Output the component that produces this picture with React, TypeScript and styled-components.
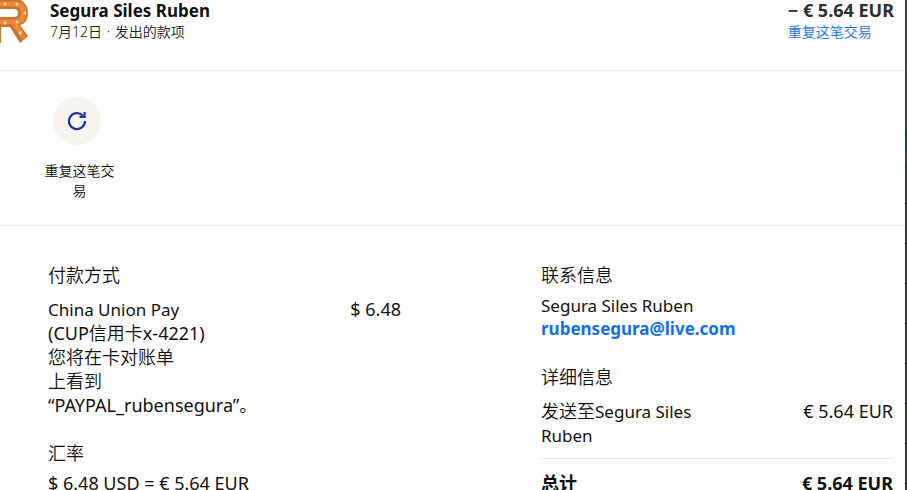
import React from "react";
import styled, { createGlobalStyle } from "styled-components";

const GlobalStyle = createGlobalStyle`
  *, *::before, *::after { box-sizing: border-box; }
  body {
    margin: 0;
    overflow: hidden;
    background: #fff;
    color: #111;
    font-family: "Noto Sans", "Noto Sans CJK SC", sans-serif;
    font-size: 18px;
    line-height: 24px;
  }
  h2, p { margin: 0; }
`;

const Page = styled.div`
  display: flex;
  height: 100vh;
  overflow: hidden;
`;

const Sheet = styled.main`
  flex: 1;
  min-width: 0;
`;

const Backdrop = styled.div`
  width: 2px;
  background:
    repeating-linear-gradient(transparent 0 39px, #0b120b 39px 40px) 0 164px / 100% 100% no-repeat,
    linear-gradient(#3d3f40 0 129px, #10454f 129px 149px, #3d3f40 149px 164px, #2a4020 164px);
`;

const Header = styled.header`
  display: flex;
  height: 71px;
  padding-right: 11px;
  border-bottom: 1px solid #eceae5;
`;

const Logo = styled.svg`
  flex: none;
  width: 50px;
  height: 48px;
`;

const Summary = styled.div<{ $grow?: boolean }>`
  flex: ${(p) => (p.$grow ? 1 : "none")};
  display: flex;
  flex-direction: column;
`;

const Title = styled.strong<{ $muted?: boolean }>`
  color: ${(p) => (p.$muted ? "#2c2e2f" : "#111")};
  font-weight: 700;
  line-height: 21px;
`;

const Name = styled.span`
  font-size: 17px;
  line-height: 1;
`;

const Chinese = styled.span`
  font-weight: 350;
`;

const Subtitle = styled.span`
  font-size: 14px;
  font-weight: 350;
  line-height: 22px;
  color: #222;
`;

const Separator = styled.span`
  margin: 0 1px;
`;

const RepeatLink = styled.a`
  font-size: 14px;
  font-weight: 350;
  line-height: 22px;
  color: #1072eb;
  text-decoration: none;
`;

const Actions = styled.section`
  height: 155px;
  padding: 26px 37px 0;
  border-bottom: 1px solid #eceae5;
`;

const Action = styled.button`
  display: flex;
  flex-direction: column;
  align-items: center;
  gap: 16px;
  width: 80px;
  padding: 0;
  border: 0;
  background: none;
  color: #111;
  font: inherit;
  font-size: 14px;
  font-weight: 350;
  line-height: 20px;
  cursor: pointer;
`;

const ActionLabel = styled.span`
  padding-left: 5px;
`;

const ActionIcon = styled.span`
  display: grid;
  place-items: center;
  width: 48px;
  height: 48px;
  border-radius: 50%;
  background: #f5f4ef;
`;

const Details = styled.section`
  display: grid;
  grid-template-columns: 353px 1fr;
  column-gap: 140px;
  padding: 37px 12px 0 48px;
`;

const Column = styled.div`
  display: flex;
  flex-direction: column;
  gap: 24px;
`;

const Group = styled.div<{ $gap?: number }>`
  display: flex;
  flex-direction: column;
  gap: ${(p) => p.$gap ?? 6}px;
`;

const Heading = styled.h2`
  font-size: 18px;
  font-weight: 350;
`;

const Row = styled.div`
  display: flex;
  justify-content: space-between;
`;

const Label = styled.p<{ $width: number }>`
  width: ${(p) => p.$width}px;
`;

const Amount = styled.p`
  white-space: nowrap;
`;

const Email = styled.a`
  display: block;
  color: #1072eb;
  font-size: 17px;
  font-weight: 700;
  text-decoration: none;
`;

const Total = styled(Row)`
  margin-top: 1px;
  padding-top: 12px;
  border-top: 1px solid #eceae5;
  font-weight: 700;
`;

const bulbs = [
  [5, 4], [17, 4], [25, 13], [5, 23], [17, 22], [20, 33],
];

export default function App() {
  return (
    <Page>
      <GlobalStyle />
      <Sheet>
        <Header>
          <Logo viewBox="0 0 50 48" role="img" aria-label="R">
            <path d="M-6 -2H15Q28 1 28 13Q28 23 20 25L28 36L20 43L10 27H1V43H-6ZM0 9V17H14Q18 17 18 13Q18 9 14 9Z" fill="#cf722b" fillRule="evenodd" />
            <path d="M-6 4H14Q24 4 24 13Q24 22 14 22H-6M14 22L24 38" fill="none" stroke="#e88a3d" strokeWidth="5" />
            {bulbs.map(([x, y]) => (
              <circle key={`${x}-${y}`} cx={x} cy={y} r="1.5" fill="#ffdc9a" />
            ))}
          </Logo>
          <Summary $grow>
            <Title><Name>Segura Siles Ruben</Name></Title>
            <Subtitle>7月12日 <Separator>·</Separator> 发出的款项</Subtitle>
          </Summary>
          <Summary>
            <Title $muted>− € 5.64 EUR</Title>
            <RepeatLink href="#repeat">重复这笔交易</RepeatLink>
          </Summary>
        </Header>

        <Actions>
          <Action type="button">
            <ActionIcon>
              <svg width="24" height="24" viewBox="0 0 24 24" fill="none" stroke="#1f3699" strokeWidth="2.2" aria-hidden="true">
                <path d="M17.8 6.6A8 8 0 1 0 20 12" />
                <path d="M19.6 3V7.8H14.5" />
              </svg>
            </ActionIcon>
            <ActionLabel>重复这笔交易</ActionLabel>
          </Action>
        </Actions>

        <Details>
          <Column>
            <Group $gap={10}>
              <Heading>付款方式</Heading>
              <Row>
                <Label $width={205}>
                  <Name>China Union Pay</Name>
                  <br />
                  (CUP<Chinese>信用卡</Chinese>x-4221)
                  <br />
                  <Chinese>您将在卡对账单</Chinese>
                  <br />
                  <Chinese>上看到</Chinese>
                  <br />
                  “PAYPAL_rubensegura”。
                </Label>
                <Amount>$ 6.48</Amount>
              </Row>
            </Group>
            <Group>
              <Heading>汇率</Heading>
              <Amount>$ 6.48 USD = € 5.64 EUR</Amount>
            </Group>
          </Column>
          <Column>
            <Group>
              <Heading>联系信息</Heading>
              <div>
                <p><Name>Segura Siles Ruben</Name></p>
                <Email href="mailto:rubensegura@live.com">rubensegura@live.com</Email>
              </div>
            </Group>
            <Group $gap={10}>
              <Heading>详细信息</Heading>
              <Row>
                <Label $width={170}><Chinese>发送至</Chinese><Name>Segura Siles Ruben</Name></Label>
                <Amount>€ 5.64 EUR</Amount>
              </Row>
              <Total>
                <p>总计</p>
                <p>€ 5.64 EUR</p>
              </Total>
            </Group>
          </Column>
        </Details>
      </Sheet>
      <Backdrop />
    </Page>
  );
}
